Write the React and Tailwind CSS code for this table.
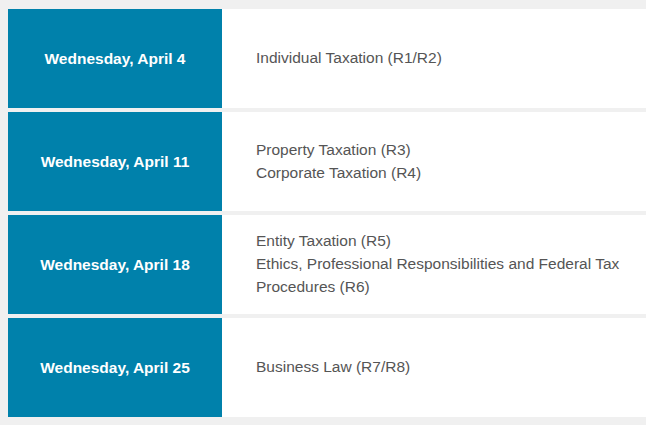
import React from 'react'

const rows = [
  { date: 'Wednesday, April 4', topics: ['Individual Taxation (R1/R2)'] },
  { date: 'Wednesday, April 11', topics: ['Property Taxation (R3)', 'Corporate Taxation (R4)'] },
  {
    date: 'Wednesday, April 18',
    topics: ['Entity Taxation (R5)', 'Ethics, Professional Responsibilities and Federal Tax Procedures (R6)'],
  },
  { date: 'Wednesday, April 25', topics: ['Business Law (R7/R8)'] },
]

export const Schedule = () => {
  return (
    <div className="min-h-[425px] w-[646px] bg-[#f0f0f0] pt-[9px] pl-[8px] font-['Liberation_Sans',Arial,sans-serif]">
      <div className="flex flex-col gap-[4px]">
        {rows.map((row, index) => (
          <div key={index} className="flex h-[99px]">
            <div className="flex w-[214px] items-center justify-center bg-[#0081ab] text-[15.5px] font-bold text-white">
              {row.date}
            </div>
            <div className="flex flex-1 flex-col justify-center bg-white pb-[2px] pl-[34px] pr-[20px] text-[15.5px] leading-[23px] text-[#555555]">
              {row.topics.map((topic, i) => (
                <div key={i}>{topic}</div>
              ))}
            </div>
          </div>
        ))}
      </div>
    </div>
  )
}

export default Schedule
